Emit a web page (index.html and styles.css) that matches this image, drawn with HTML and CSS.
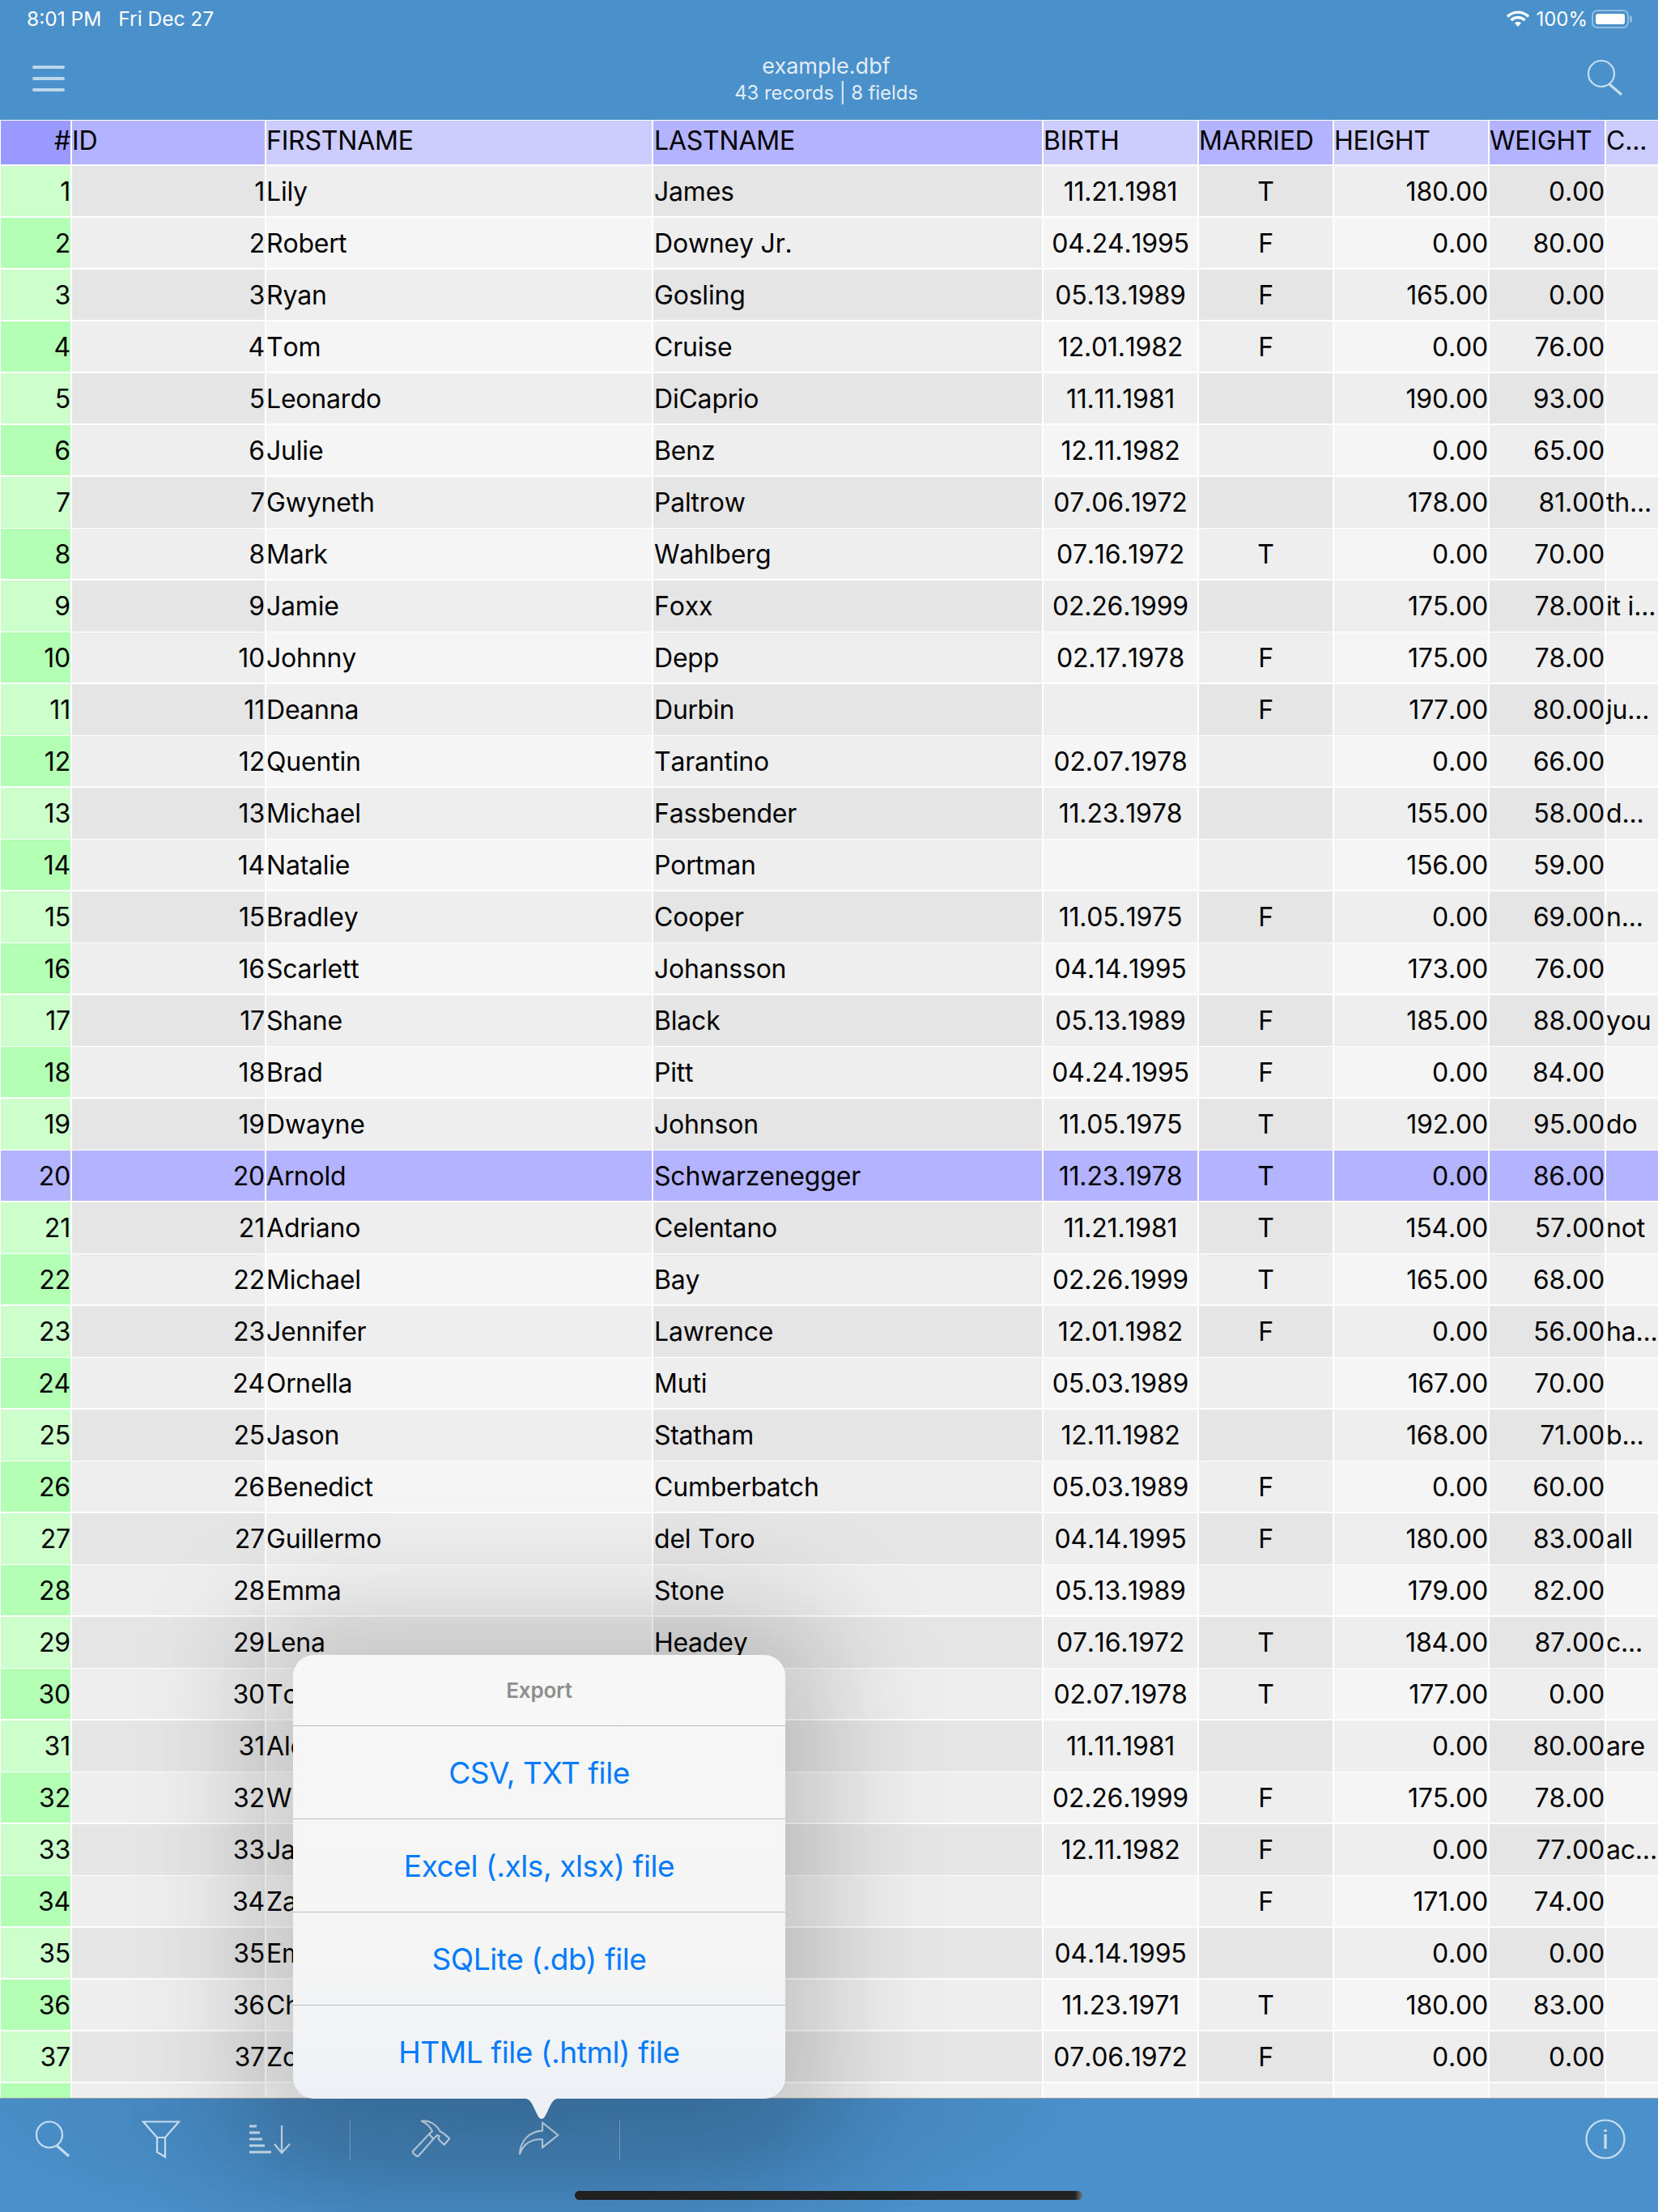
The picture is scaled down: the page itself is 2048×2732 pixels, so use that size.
FILE: index.html
```html
<!DOCTYPE html>
<html lang="en">
<head>
<meta charset="utf-8">
<title>example.dbf</title>
<link rel="stylesheet" href="styles.css">
</head>
<body>
<div class="app">
  <header class="topbar">
    <div class="status">
      <div class="status-left"><span>8:01 PM</span><span>Fri Dec 27</span></div>
      <div class="status-right">
        <svg class="wifi" viewBox="0 0 28 20"><path d="M1 7.5a18.5 18.5 0 0 1 26 0M5.500 12a12.200 12.200 0 0 1 17 0" fill="none" stroke="#fff" stroke-width="3.400"/><path d="M10 15.400a5.800 5.800 0 0 1 8 0L14 20z" fill="#fff"/></svg>
        <span>100%</span>
        <div class="battery"><div class="battery-level"></div></div>
      </div>
    </div>
    <nav class="navbar">
      <div class="burger"><i></i><i></i><i></i></div>
      <div class="title"><div class="title-main">example.dbf</div><div class="title-sub">43 records | 8 fields</div></div>
      <svg class="icon nav-search" viewBox="0 0 44 44"><circle cx="17" cy="17" r="16"/><path d="M27 30l15 13" class="thick"/></svg>
    </nav>
  </header>

  <main class="table">
    <div class="row head"><span>#</span><span>ID</span><span>FIRSTNAME</span><span>LASTNAME</span><span>BIRTH</span><span>MARRIED</span><span>HEIGHT</span><span>WEIGHT</span><span>C...</span></div>
    <div class="row"><span>1</span><span>1</span><span>Lily</span><span>James</span><span>11.21.1981</span><span>T</span><span>180.00</span><span>0.00</span><span></span></div>
    <div class="row"><span>2</span><span>2</span><span>Robert</span><span>Downey Jr.</span><span>04.24.1995</span><span>F</span><span>0.00</span><span>80.00</span><span></span></div>
    <div class="row"><span>3</span><span>3</span><span>Ryan</span><span>Gosling</span><span>05.13.1989</span><span>F</span><span>165.00</span><span>0.00</span><span></span></div>
    <div class="row"><span>4</span><span>4</span><span>Tom</span><span>Cruise</span><span>12.01.1982</span><span>F</span><span>0.00</span><span>76.00</span><span></span></div>
    <div class="row"><span>5</span><span>5</span><span>Leonardo</span><span>DiCaprio</span><span>11.11.1981</span><span></span><span>190.00</span><span>93.00</span><span></span></div>
    <div class="row"><span>6</span><span>6</span><span>Julie</span><span>Benz</span><span>12.11.1982</span><span></span><span>0.00</span><span>65.00</span><span></span></div>
    <div class="row"><span>7</span><span>7</span><span>Gwyneth</span><span>Paltrow</span><span>07.06.1972</span><span></span><span>178.00</span><span>81.00</span><span>th...</span></div>
    <div class="row"><span>8</span><span>8</span><span>Mark</span><span>Wahlberg</span><span>07.16.1972</span><span>T</span><span>0.00</span><span>70.00</span><span></span></div>
    <div class="row"><span>9</span><span>9</span><span>Jamie</span><span>Foxx</span><span>02.26.1999</span><span></span><span>175.00</span><span>78.00</span><span>it i...</span></div>
    <div class="row"><span>10</span><span>10</span><span>Johnny</span><span>Depp</span><span>02.17.1978</span><span>F</span><span>175.00</span><span>78.00</span><span></span></div>
    <div class="row"><span>11</span><span>11</span><span>Deanna</span><span>Durbin</span><span></span><span>F</span><span>177.00</span><span>80.00</span><span>ju...</span></div>
    <div class="row"><span>12</span><span>12</span><span>Quentin</span><span>Tarantino</span><span>02.07.1978</span><span></span><span>0.00</span><span>66.00</span><span></span></div>
    <div class="row"><span>13</span><span>13</span><span>Michael</span><span>Fassbender</span><span>11.23.1978</span><span></span><span>155.00</span><span>58.00</span><span>d...</span></div>
    <div class="row"><span>14</span><span>14</span><span>Natalie</span><span>Portman</span><span></span><span></span><span>156.00</span><span>59.00</span><span></span></div>
    <div class="row"><span>15</span><span>15</span><span>Bradley</span><span>Cooper</span><span>11.05.1975</span><span>F</span><span>0.00</span><span>69.00</span><span>n...</span></div>
    <div class="row"><span>16</span><span>16</span><span>Scarlett</span><span>Johansson</span><span>04.14.1995</span><span></span><span>173.00</span><span>76.00</span><span></span></div>
    <div class="row"><span>17</span><span>17</span><span>Shane</span><span>Black</span><span>05.13.1989</span><span>F</span><span>185.00</span><span>88.00</span><span>you</span></div>
    <div class="row"><span>18</span><span>18</span><span>Brad</span><span>Pitt</span><span>04.24.1995</span><span>F</span><span>0.00</span><span>84.00</span><span></span></div>
    <div class="row"><span>19</span><span>19</span><span>Dwayne</span><span>Johnson</span><span>11.05.1975</span><span>T</span><span>192.00</span><span>95.00</span><span>do</span></div>
    <div class="row selected"><span>20</span><span>20</span><span>Arnold</span><span>Schwarzenegger</span><span>11.23.1978</span><span>T</span><span>0.00</span><span>86.00</span><span></span></div>
    <div class="row"><span>21</span><span>21</span><span>Adriano</span><span>Celentano</span><span>11.21.1981</span><span>T</span><span>154.00</span><span>57.00</span><span>not</span></div>
    <div class="row"><span>22</span><span>22</span><span>Michael</span><span>Bay</span><span>02.26.1999</span><span>T</span><span>165.00</span><span>68.00</span><span></span></div>
    <div class="row"><span>23</span><span>23</span><span>Jennifer</span><span>Lawrence</span><span>12.01.1982</span><span>F</span><span>0.00</span><span>56.00</span><span>ha...</span></div>
    <div class="row"><span>24</span><span>24</span><span>Ornella</span><span>Muti</span><span>05.03.1989</span><span></span><span>167.00</span><span>70.00</span><span></span></div>
    <div class="row"><span>25</span><span>25</span><span>Jason</span><span>Statham</span><span>12.11.1982</span><span></span><span>168.00</span><span>71.00</span><span>b...</span></div>
    <div class="row"><span>26</span><span>26</span><span>Benedict</span><span>Cumberbatch</span><span>05.03.1989</span><span>F</span><span>0.00</span><span>60.00</span><span></span></div>
    <div class="row"><span>27</span><span>27</span><span>Guillermo</span><span>del Toro</span><span>04.14.1995</span><span>F</span><span>180.00</span><span>83.00</span><span>all</span></div>
    <div class="row"><span>28</span><span>28</span><span>Emma</span><span>Stone</span><span>05.13.1989</span><span></span><span>179.00</span><span>82.00</span><span></span></div>
    <div class="row"><span>29</span><span>29</span><span>Lena</span><span>Headey</span><span>07.16.1972</span><span>T</span><span>184.00</span><span>87.00</span><span>c...</span></div>
    <div class="row"><span>30</span><span>30</span><span>Tom</span><span></span><span>02.07.1978</span><span>T</span><span>177.00</span><span>0.00</span><span></span></div>
    <div class="row"><span>31</span><span>31</span><span>Alec</span><span></span><span>11.11.1981</span><span></span><span>0.00</span><span>80.00</span><span>are</span></div>
    <div class="row"><span>32</span><span>32</span><span>Will</span><span></span><span>02.26.1999</span><span>F</span><span>175.00</span><span>78.00</span><span></span></div>
    <div class="row"><span>33</span><span>33</span><span>Jake</span><span></span><span>12.11.1982</span><span>F</span><span>0.00</span><span>77.00</span><span>ac...</span></div>
    <div class="row"><span>34</span><span>34</span><span>Zac</span><span></span><span></span><span>F</span><span>171.00</span><span>74.00</span><span></span></div>
    <div class="row"><span>35</span><span>35</span><span>Emma</span><span></span><span>04.14.1995</span><span></span><span>0.00</span><span>0.00</span><span></span></div>
    <div class="row"><span>36</span><span>36</span><span>Chris</span><span></span><span>11.23.1971</span><span>T</span><span>180.00</span><span>83.00</span><span></span></div>
    <div class="row"><span>37</span><span>37</span><span>Zoe</span><span></span><span>07.06.1972</span><span>F</span><span>0.00</span><span>0.00</span><span></span></div>
    <div class="row"><span>38</span><span>38</span><span>Tim</span><span></span><span>02.07.1978</span><span></span><span>0.00</span><span>0.00</span><span></span></div>
  </main>

  <footer class="toolbar">
    <svg class="icon tool" viewBox="0 0 48 50"><circle cx="19" cy="18.500" r="16"/><path d="M28 32l15 13" class="thick"/></svg>
    <svg class="icon tool" viewBox="0 0 48 50"><path d="M2 2.500H46L29 22H19ZM19 22V40L29 46V22"/></svg>
    <svg class="icon tool" viewBox="0 0 48 50"><path d="M0 8H9M0 16H13M0 24H16M0 32H19M0 40H27" class="thick"/><path d="M40 7V41M31 30l9 11 10-11"/></svg>
    <i class="sep"></i>
    <svg class="icon tool" viewBox="57 51 144 150"><path class="big" d="M92 56C118 52 146 66 162 96L172 100 196 121 176 144 154 122 158 112 150 108 136 122 120 104 132 94C124 76 110 64 92 56ZM120 104 60 168Q58 172 62 176L74 186Q78 188 82 184L136 122"/></svg>
    <svg class="icon tool share" viewBox="456 51 141 150"><path class="big" d="M456 178C458 130 490 95 540 92V62L598 108 540 154V124C500 122 470 140 456 178Z"/></svg>
    <i class="sep"></i>
    <svg class="icon tool info" viewBox="0 0 48 50"><circle cx="24" cy="24" r="23.500"/><path d="M24 12v3M24 18v18" class="thick"/></svg>
    <div class="home"></div>
  </footer>

  <div class="pop-shade"></div>
  <section class="popover">
    <div class="pop-title">Export</div>
    <div class="pop-item">CSV, TXT file</div>
    <div class="pop-item">Excel (.xls, xlsx) file</div>
    <div class="pop-item">SQLite (.db) file</div>
    <div class="pop-item">HTML file (.html) file</div>
    <svg class="pop-arrow" viewBox="0 0 58 27"><path d="M0 0C14 0 15 3 20 13 24 22 26 26 29 26 32 26 34 22 38 13 43 3 44 0 58 0Z"/></svg>
  </section>
</div>
</body>
</html>
```

FILE: styles.css
```css
* { box-sizing: border-box; }
html, body { margin: 0; padding: 0; background: #fff; }
.app {
  position: relative;
  width: 2048px;
  height: 2732px;
  overflow: hidden;
  display: flex;
  flex-direction: column;
  font-family: Inter, "Liberation Sans", sans-serif;
  color: #000;
}

/* top bar */
.topbar { height: 148px; flex: none; background: #4a90cb; color: #fff; }
.status {
  height: 46px;
  display: flex;
  justify-content: space-between;
  align-items: center;
  padding: 0 31px 0 33px;
  font-size: 24px;
}
.status-left { display: flex; gap: 21px; font-size: 24.500px; }
.status-right { display: flex; align-items: center; gap: 8px; }
.wifi { width: 28px; height: 20px; }
.battery {
  position: relative;
  width: 46px;
  height: 23px;
  margin-left: -3px;
  margin-right: 5px;
  padding: 3px;
  border: 2px solid rgba(255, 255, 255, .4);
  border-radius: 7px;
}
.battery::after {
  content: "";
  position: absolute;
  right: -6px;
  top: 5px;
  width: 3px;
  height: 9px;
  border-radius: 0 3px 3px 0;
  background: rgba(255, 255, 255, .4);
}
.battery-level { height: 100%; background: #fff; border-radius: 3px; }
.navbar {
  height: 102px;
  display: flex;
  justify-content: space-between;
  align-items: center;
  padding: 0 43px 0 40px;
  position: relative;
}
.burger { width: 40px; display: flex; flex-direction: column; gap: 10px; }
.burger i { display: block; height: 4px; border-radius: 2px; background: #bcd7ec; }
.title { text-align: center; padding-top: 2px; color: rgba(255, 255, 255, .85); }
.title-main { font-size: 27px; line-height: 34px; }
.title-sub { font-size: 24px; line-height: 32px; letter-spacing: -0.1px; }

.icon { overflow: visible; fill: none; stroke: #c8deef; stroke-width: 2.2; }
.icon .thick { stroke-width: 3.2; }
.icon .big { stroke-width: 6.500; stroke-linejoin: round; }
.nav-search { width: 44px; height: 44px; margin-top: -2px; }

/* table */
.table { flex: 1; min-height: 0; overflow: hidden; padding-top: 1px; background: #fff; }
.row {
  display: grid;
  grid-template-columns: 86px 238px 476px 480px 190px 165px 190px 142px 64px;
  column-gap: 2px;
  padding-left: 1px;
  height: 62px;
  margin-bottom: 2px;
  font-size: 32px;
  letter-spacing: -0.2px;
  font-kerning: none;
  white-space: nowrap;
}
.row > span { display: block; line-height: 63px; overflow: hidden; }
.row > :nth-child(1) { background: #ccffcc; text-align: right; }
.row > :nth-child(2) { background: #e5e5e5; text-align: right; }
.row > :nth-child(3) { background: #eeeeee; }
.row > :nth-child(4) { background: #e5e5e5; padding-left: 1px; }
.row > :nth-child(5) { background: #eeeeee; text-align: center; }
.row > :nth-child(6) { background: #e5e5e5; text-align: center; }
.row > :nth-child(7) { background: #eeeeee; text-align: right; }
.row > :nth-child(8) { background: #e5e5e5; text-align: right; }
.row > :nth-child(9) { background: #eeeeee; overflow: visible; }
.row:nth-child(odd) > :nth-child(1) { background: #b3ffb3; }
.row:nth-child(odd) > :nth-child(2),
.row:nth-child(odd) > :nth-child(4),
.row:nth-child(odd) > :nth-child(6),
.row:nth-child(odd) > :nth-child(8) { background: #eeeeee; }
.row:nth-child(odd) > :nth-child(3),
.row:nth-child(odd) > :nth-child(5),
.row:nth-child(odd) > :nth-child(7),
.row:nth-child(odd) > :nth-child(9) { background: #f5f5f5; }
.row.head { height: 54px; font-kerning: normal; }
.row.head > span { line-height: 50px; text-align: left; }
.row.head > :nth-child(1) { background: #9999ff; text-align: right; }
.row.head > :nth-child(2),
.row.head > :nth-child(4),
.row.head > :nth-child(6),
.row.head > :nth-child(8) { background: #b3b3ff; }
.row.head > :nth-child(3),
.row.head > :nth-child(5),
.row.head > :nth-child(7),
.row.head > :nth-child(9) { background: #ccccff; }
.row.selected > span:nth-child(n) { background: #b3b3ff; }

/* toolbar */
.toolbar {
  position: relative;
  height: 141px;
  flex: none;
  display: flex;
  align-items: flex-start;
  gap: 85px;
  padding: 26px 41px 0 42px;
  background: radial-gradient(ellipse 720px 190px at 640px 0, rgba(0, 0, 0, .1) 0%, rgba(0, 0, 0, .08) 50%, rgba(0, 0, 0, 0) 100%), #4a90cb;
  border-top: 1px solid #9a9a9a;
}
.tool { width: 48px; height: 50px; flex: none; }
.tool.share { width: 47px; }
.tool.info { margin-left: auto; }
.sep { flex: none; width: 1px; height: 50px; margin: 0 -9px; background: rgba(255, 255, 255, .35); }
.home {
  position: absolute;
  left: 710px;
  top: 114px;
  width: 627px;
  height: 11px;
  border-radius: 6px;
  background: linear-gradient(90deg, #222 98.500%, #777 100%);
}

/* popover */
.pop-shade {
  position: absolute;
  left: 310px;
  top: 1990px;
  width: 712px;
  height: 690px;
  border-radius: 60px;
  background: rgba(0, 0, 0, .18);
  filter: blur(70px);
}
.popover {
  position: absolute;
  left: 362px;
  top: 2044px;
  width: 608px;
  height: 548px;
  border-radius: 26px;
  background: linear-gradient(#f7f7f7 0%, #f5f5f5 70%, #edf1f5 100%);
}
.pop-title {
  height: 87px;
  display: flex;
  align-items: center;
  justify-content: center;
  font-size: 26px;
  font-weight: 600;
  color: #8e8e8e;
  letter-spacing: -0.2px;
}
.pop-item {
  height: 115px;
  display: flex;
  align-items: center;
  justify-content: center;
  border-top: 1px solid #bdbdbd;
  font-size: 37px;
  letter-spacing: -0.4px;
  color: #007aff;
}
.pop-arrow {
  position: absolute;
  left: 278px;
  top: 547px;
  width: 58px;
  height: 27px;
  fill: #edf1f5;
}
```
